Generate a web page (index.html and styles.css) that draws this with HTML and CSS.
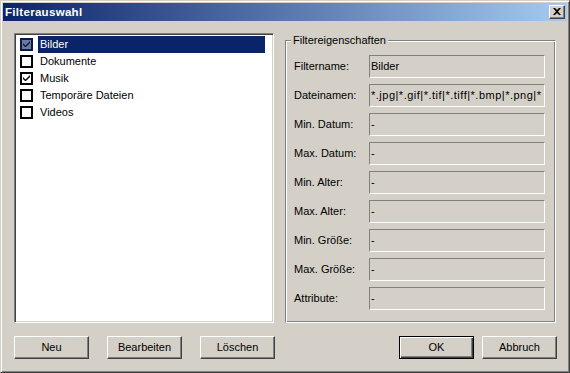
FILE: index.html
```html
<!DOCTYPE html>
<html lang="de">
<head>
<meta charset="utf-8">
<title>Filterauswahl</title>
<link rel="stylesheet" href="styles.css">
</head>
<body>
<div class="window">
  <div class="titlebar">
    <span class="title">Filterauswahl</span>
    <div class="close-btn">
      <svg width="8" height="7" viewBox="0 0 8 7"><path d="M0 0h2l2 2 2-2h2L5 3.5 8 7H6L4 5 2 7H0l3-3.5z" fill="#000"/></svg>
    </div>
  </div>
  <div class="content">
    <div class="main">
      <div class="listbox">
        <div class="row selected">
          <span class="check checked"><svg width="9" height="9" viewBox="0 0 9 9"><path d="M1 3v2l2 2h1l4-4V1L3.5 5.5z" fill="currentColor"/></svg></span>
          <span class="item">Bilder</span>
        </div>
        <div class="row">
          <span class="check"></span>
          <span class="item">Dokumente</span>
        </div>
        <div class="row">
          <span class="check checked"><svg width="9" height="9" viewBox="0 0 9 9"><path d="M1 3v2l2 2h1l4-4V1L3.5 5.5z" fill="currentColor"/></svg></span>
          <span class="item">Musik</span>
        </div>
        <div class="row">
          <span class="check"></span>
          <span class="item">Temporäre Dateien</span>
        </div>
        <div class="row">
          <span class="check"></span>
          <span class="item">Videos</span>
        </div>
      </div>
      <fieldset class="group">
        <legend class="legend">Filtereigenschaften</legend>
        <div class="props">
          <span class="label">Filtername:</span><div class="field">Bilder</div>
          <span class="label">Dateinamen:</span><div class="field wide">*.jpg|*.gif|*.tif|*.tiff|*.bmp|*.png|*</div>
          <span class="label">Min. Datum:</span><div class="field">-</div>
          <span class="label">Max. Datum:</span><div class="field">-</div>
          <span class="label">Min. Alter:</span><div class="field">-</div>
          <span class="label">Max. Alter:</span><div class="field">-</div>
          <span class="label">Min. Größe:</span><div class="field">-</div>
          <span class="label">Max. Größe:</span><div class="field">-</div>
          <span class="label">Attribute:</span><div class="field">-</div>
        </div>
      </fieldset>
    </div>
    <div class="buttons">
      <div class="btn-group left">
        <div class="btn">Neu</div>
        <div class="btn">Bearbeiten</div>
        <div class="btn">Löschen</div>
      </div>
      <div class="btn-group right">
        <div class="btn default">OK</div>
        <div class="btn">Abbruch</div>
      </div>
    </div>
  </div>
</div>
</body>
</html>
```
FILE: styles.css
```css
* { box-sizing: border-box; }
html, body {
  margin: 0;
  padding: 0;
  background: #D4D0C8;
}
body {
  font-family: "Liberation Sans", Arial, sans-serif;
  font-size: 11px;
  color: #000;
}
.window {
  width: 570px;
  height: 373px;
  background: #D4D0C8;
  border: 1px solid;
  border-color: #D4D0C8 #404040 #404040 #D4D0C8;
  box-shadow: inset 1px 1px 0 #fff, inset -1px -1px 0 #808080;
  padding: 2px;
  display: flex;
  flex-direction: column;
}
.titlebar {
  height: 18px;
  background: linear-gradient(to right, #0A246A, #A6CAF0);
  display: flex;
  align-items: center;
  justify-content: space-between;
  padding: 0 2px 0 2px;
}
.title {
  color: #fff;
  font-weight: bold;
  font-size: 11.5px;
  letter-spacing: 0.3px;
  line-height: 18px;
}
.close-btn {
  width: 16px;
  height: 14px;
  background: #D4D0C8;
  border: 1px solid;
  border-color: #fff #404040 #404040 #fff;
  box-shadow: inset -1px -1px 0 #808080;
  display: flex;
  align-items: center;
  justify-content: center;
  padding: 0 1px 1px 0;
}
.content {
  flex: 1;
  padding: 12px 11px 11px 11px;
  display: flex;
  flex-direction: column;
}
.main {
  display: flex;
  gap: 11px;
  height: 290px;
}
.listbox {
  width: 260px;
  height: 290px;
  background: #fff;
  border: 1px solid;
  border-color: #808080 #fff #fff #808080;
  box-shadow: inset 1px 1px 0 #404040, inset -1px -1px 0 #D4D0C8;
  padding: 2px 2px 2px 2px;
}
.row {
  height: 17px;
  display: flex;
  align-items: center;
}
.check {
  width: 13px;
  height: 13px;
  border: 2px solid #000;
  background: #fff;
  margin-left: 3px;
  margin-right: 5px;
  display: flex;
  align-items: center;
  justify-content: center;
  color: #000;
}
.row.selected .check {
  background: #6C7AA2;
  border-color: #0A1A48;
  color: #0A1A48;
}
.item {
  width: 227px;
  height: 17px;
  line-height: 17px;
  padding-left: 2px;
}
.row.selected .item {
  background: #0A246A;
  color: #fff;
}
.group {
  flex: 1;
  margin: 0;
  padding: 0 10px 0 8px;
  border: 1px solid;
  border-color: #808080 #fff #fff #808080;
  box-shadow: inset 1px 1px 0 #fff, inset -1px -1px 0 #808080;
  height: 290px;
  min-width: 0;
}
.legend {
  padding: 0 2px;
  margin-left: -3px;
  line-height: 14px;
  background: #D4D0C8;
}
.props {
  display: grid;
  grid-template-columns: 75px 176px;
  grid-auto-rows: 23px;
  row-gap: 6px;
  padding-top: 8px;
  align-items: center;
}
.label {
  line-height: 23px;
}
.field {
  height: 23px;
  border: 1px solid;
  border-color: #808080 #fff #fff #808080;
  line-height: 21px;
  padding: 0 1px;
  white-space: nowrap;
  overflow: hidden;
}
.field.wide {
  letter-spacing: 0.5px;
}
.buttons {
  margin-top: 13px;
  display: flex;
  justify-content: space-between;
}
.btn-group {
  display: flex;
}
.btn-group.left { gap: 18px; }
.btn-group.right { gap: 8px; margin-right: -1px; }
.btn {
  width: 75px;
  height: 23px;
  border: 1px solid;
  border-color: #fff #404040 #404040 #fff;
  box-shadow: inset -1px -1px 0 #808080;
  display: flex;
  align-items: center;
  justify-content: center;
  padding-bottom: 1px;
}
.btn.default {
  border-color: #000;
  box-shadow: inset 1px 1px 0 #fff, inset -1px -1px 0 #404040, inset -2px -2px 0 #808080;
}
```
